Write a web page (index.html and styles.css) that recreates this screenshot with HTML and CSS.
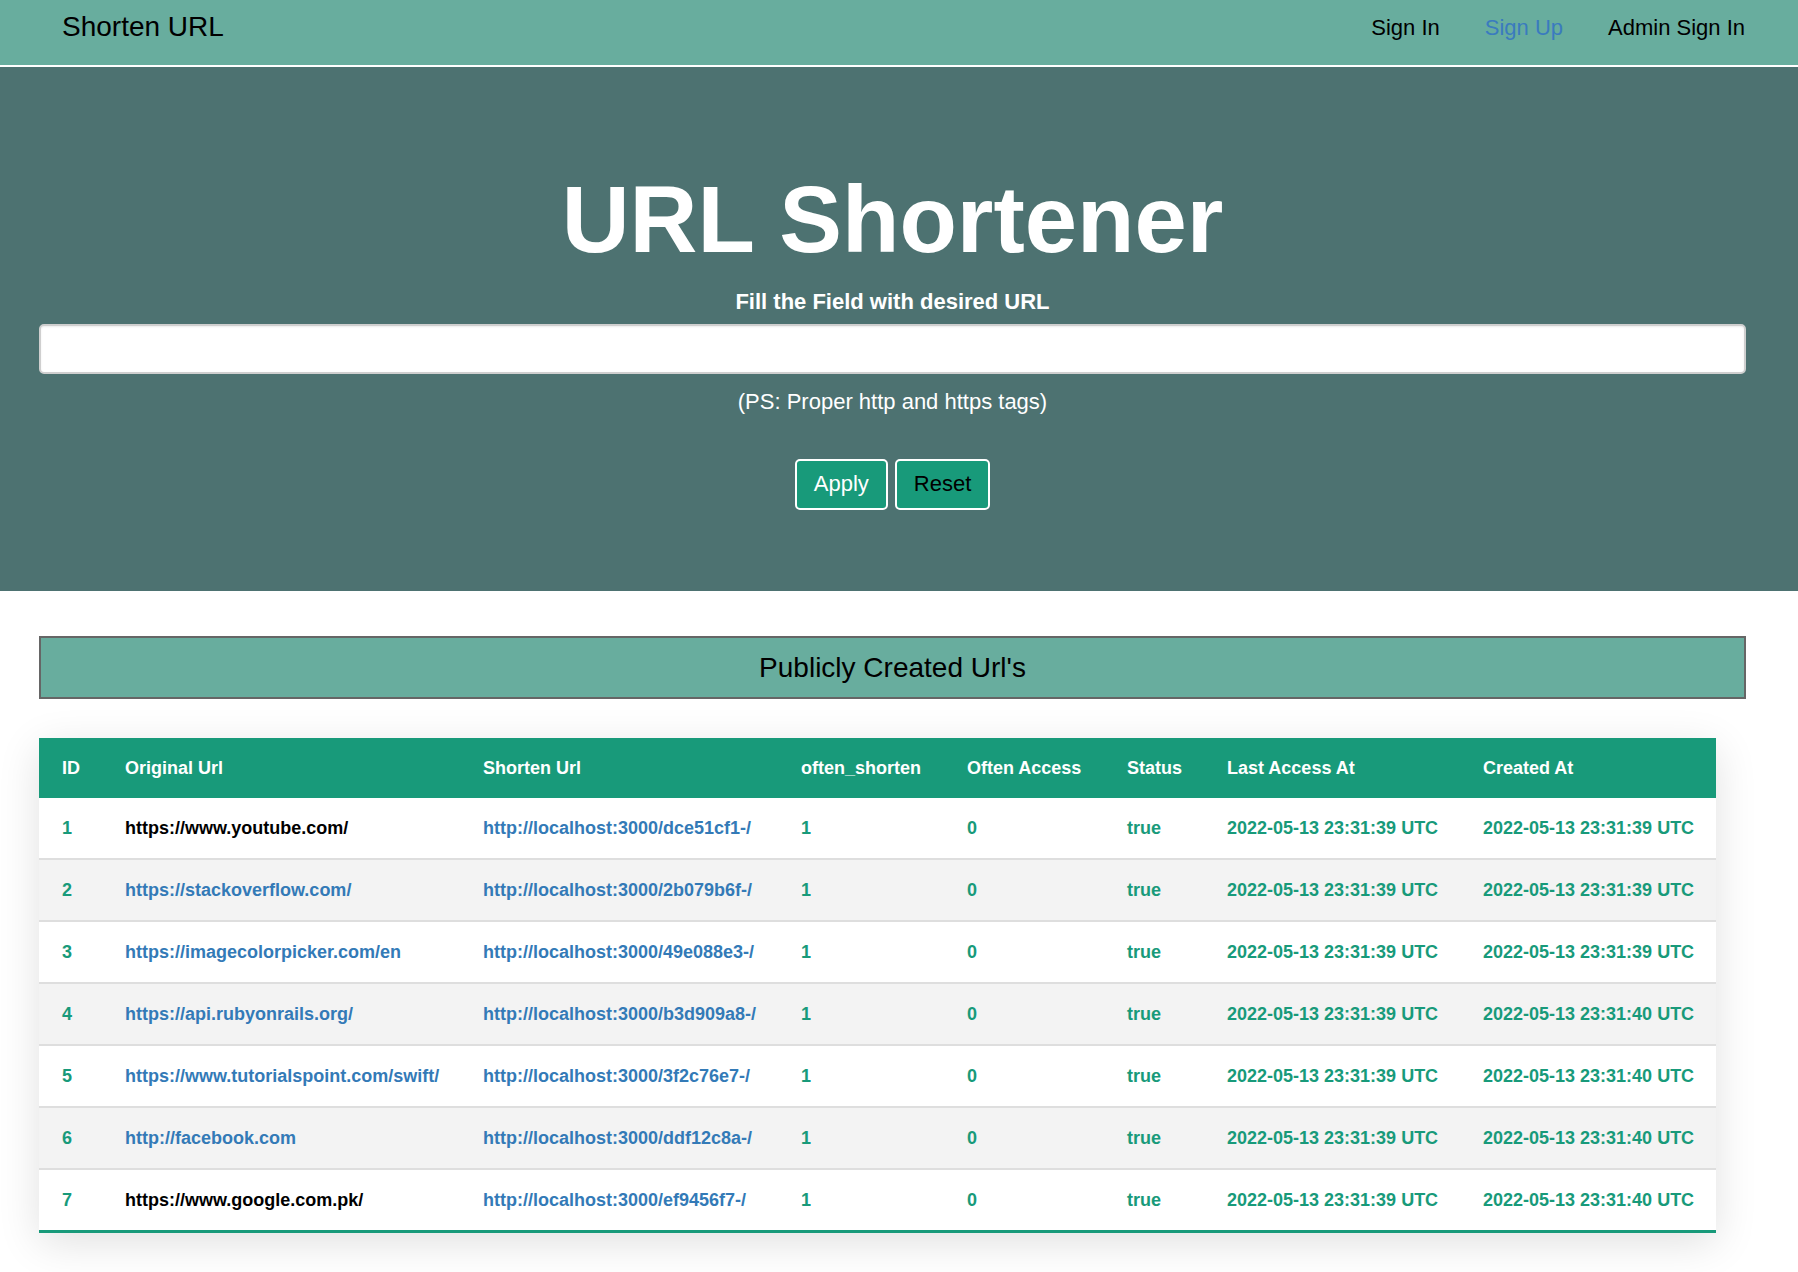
FILE: index.html
```html
<!DOCTYPE html>
<html lang="en">
<head>
<meta charset="utf-8">
<title>Shorten URL</title>
<link rel="stylesheet" href="styles.css">
</head>
<body>
<nav class="navbar">
  <a class="brand" href="#">Shorten URL</a>
  <div class="nav-links">
    <a class="nav-link" href="#">Sign In</a>
    <a class="nav-link nav-link-active" href="#">Sign Up</a>
    <a class="nav-link" href="#">Admin Sign In</a>
  </div>
</nav>

<header class="hero">
  <h1 class="hero-title">URL Shortener</h1>
  <label class="hero-label" for="url">Fill the Field with desired URL</label>
  <input class="hero-input" id="url" type="text">
  <p class="hero-hint">(PS: Proper http and https tags)</p>
  <div class="hero-actions">
    <button class="btn btn-apply" type="button">Apply</button>
    <button class="btn btn-reset" type="button">Reset</button>
  </div>
</header>

<main class="content">
  <div class="section-heading">Publicly Created Url's</div>
  <table class="url-table">
    <colgroup>
      <col class="c-id"><col class="c-orig"><col class="c-short"><col class="c-os">
      <col class="c-oa"><col class="c-status"><col class="c-date"><col class="c-date">
    </colgroup>
    <thead>
      <tr>
        <th>ID</th><th>Original Url</th><th>Shorten Url</th><th>often_shorten</th>
        <th>Often Access</th><th>Status</th><th>Last Access At</th><th>Created At</th>
      </tr>
    </thead>
    <tbody>
      <tr>
        <td>1</td><td><a class="plain" href="#">https://www.youtube.com/</a></td><td><a href="#">http://localhost:3000/dce51cf1-/</a></td>
        <td>1</td><td>0</td><td>true</td><td>2022-05-13 23:31:39 UTC</td><td>2022-05-13 23:31:39 UTC</td>
      </tr>
      <tr>
        <td>2</td><td><a href="#">https://stackoverflow.com/</a></td><td><a href="#">http://localhost:3000/2b079b6f-/</a></td>
        <td>1</td><td>0</td><td>true</td><td>2022-05-13 23:31:39 UTC</td><td>2022-05-13 23:31:39 UTC</td>
      </tr>
      <tr>
        <td>3</td><td><a href="#">https://imagecolorpicker.com/en</a></td><td><a href="#">http://localhost:3000/49e088e3-/</a></td>
        <td>1</td><td>0</td><td>true</td><td>2022-05-13 23:31:39 UTC</td><td>2022-05-13 23:31:39 UTC</td>
      </tr>
      <tr>
        <td>4</td><td><a href="#">https://api.rubyonrails.org/</a></td><td><a href="#">http://localhost:3000/b3d909a8-/</a></td>
        <td>1</td><td>0</td><td>true</td><td>2022-05-13 23:31:39 UTC</td><td>2022-05-13 23:31:40 UTC</td>
      </tr>
      <tr>
        <td>5</td><td><a href="#">https://www.tutorialspoint.com/swift/</a></td><td><a href="#">http://localhost:3000/3f2c76e7-/</a></td>
        <td>1</td><td>0</td><td>true</td><td>2022-05-13 23:31:39 UTC</td><td>2022-05-13 23:31:40 UTC</td>
      </tr>
      <tr>
        <td>6</td><td><a href="#">http://facebook.com</a></td><td><a href="#">http://localhost:3000/ddf12c8a-/</a></td>
        <td>1</td><td>0</td><td>true</td><td>2022-05-13 23:31:39 UTC</td><td>2022-05-13 23:31:40 UTC</td>
      </tr>
      <tr>
        <td>7</td><td><a class="plain" href="#">https://www.google.com.pk/</a></td><td><a href="#">http://localhost:3000/ef9456f7-/</a></td>
        <td>1</td><td>0</td><td>true</td><td>2022-05-13 23:31:39 UTC</td><td>2022-05-13 23:31:40 UTC</td>
      </tr>
    </tbody>
  </table>
</main>
</body>
</html>
```
FILE: styles.css
```css
* { box-sizing: border-box; }

body {
  margin: 0;
  background: #fff;
  font-family: "Liberation Sans", Arial, Helvetica, sans-serif;
  color: #000;
}

a { text-decoration: none; }

/* Navbar */
.navbar {
  display: flex;
  justify-content: space-between;
  align-items: flex-start;
  height: 67px;
  padding: 0 53px 0 62px;
  background: #68ad9e;
  border-bottom: 2px solid #fff;
}

.brand {
  font-size: 28px;
  line-height: 32px;
  padding-top: 11px;
  color: #000;
}

.nav-links {
  display: flex;
  gap: 45px;
  padding-top: 15px;
}

.nav-link {
  font-size: 22px;
  line-height: 25px;
  color: #000;
}

.nav-link-active { color: #3a7bbf; }

/* Hero */
.hero {
  display: flex;
  flex-direction: column;
  align-items: center;
  background: #4d7271;
  padding: 102px 52px 81px 39px;
  color: #fff;
}

.hero-title {
  margin: 0;
  font-size: 94px;
  line-height: 102px;
  font-weight: bold;
}

.hero-label {
  margin-top: 18px;
  font-size: 22px;
  line-height: 26px;
  font-weight: bold;
}

.hero-input {
  display: block;
  width: 100%;
  height: 50px;
  margin-top: 9px;
  border: 2px solid #cfcfcf;
  border-radius: 5px;
  background: #fff;
  box-shadow: inset 0 1px 2px rgba(0, 0, 0, 0.08);
  font-size: 20px;
  padding: 0 12px;
}

.hero-hint {
  margin: 15px 0 0;
  font-size: 22px;
  line-height: 26px;
}

.hero-actions {
  display: flex;
  gap: 7px;
  margin-top: 44px;
}

.btn {
  font-family: inherit;
  font-size: 22px;
  line-height: 26px;
  padding: 10px 17px 11px;
  border: 2px solid #fff;
  border-radius: 5px;
  background: #189a7a;
  cursor: pointer;
}

.btn-apply { color: #fff; }
.btn-reset { color: #000; }

/* Content */
.content {
  padding: 45px 52px 40px 39px;
}

.section-heading {
  height: 63px;
  border: 2px solid #666;
  background: #68ad9e;
  text-align: center;
  font-size: 28px;
  line-height: 59px;
  color: #000;
}

.url-table {
  margin-top: 39px;
  width: 1677px;
  table-layout: fixed;
  border-collapse: separate;
  border-spacing: 0;
  background: #fff;
  box-shadow: 0 10px 40px rgba(0, 0, 0, 0.12);
  font-size: 18px;
  font-weight: bold;
}

.c-id { width: 63px; }
.c-orig { width: 358px; }
.c-short { width: 318px; }
.c-os { width: 166px; }
.c-oa { width: 160px; }
.c-status { width: 100px; }
.c-date { width: 256px; }

.url-table th,
.url-table td {
  padding: 19px 0 19px 23px;
  line-height: 22px;
  text-align: left;
  white-space: nowrap;
}

.url-table th {
  background: #189a7a;
  color: #fff;
}

.url-table td {
  color: #189a7a;
}

.url-table tbody tr:nth-child(even) td { background: #f3f3f3; }

.url-table tbody tr + tr td { border-top: 2px solid #dedede; }

.url-table tbody tr:last-child td { border-bottom: 3px solid #189a7a; }

.url-table td a { color: #337ab7; }
.url-table td a.plain { color: #000; }
```
